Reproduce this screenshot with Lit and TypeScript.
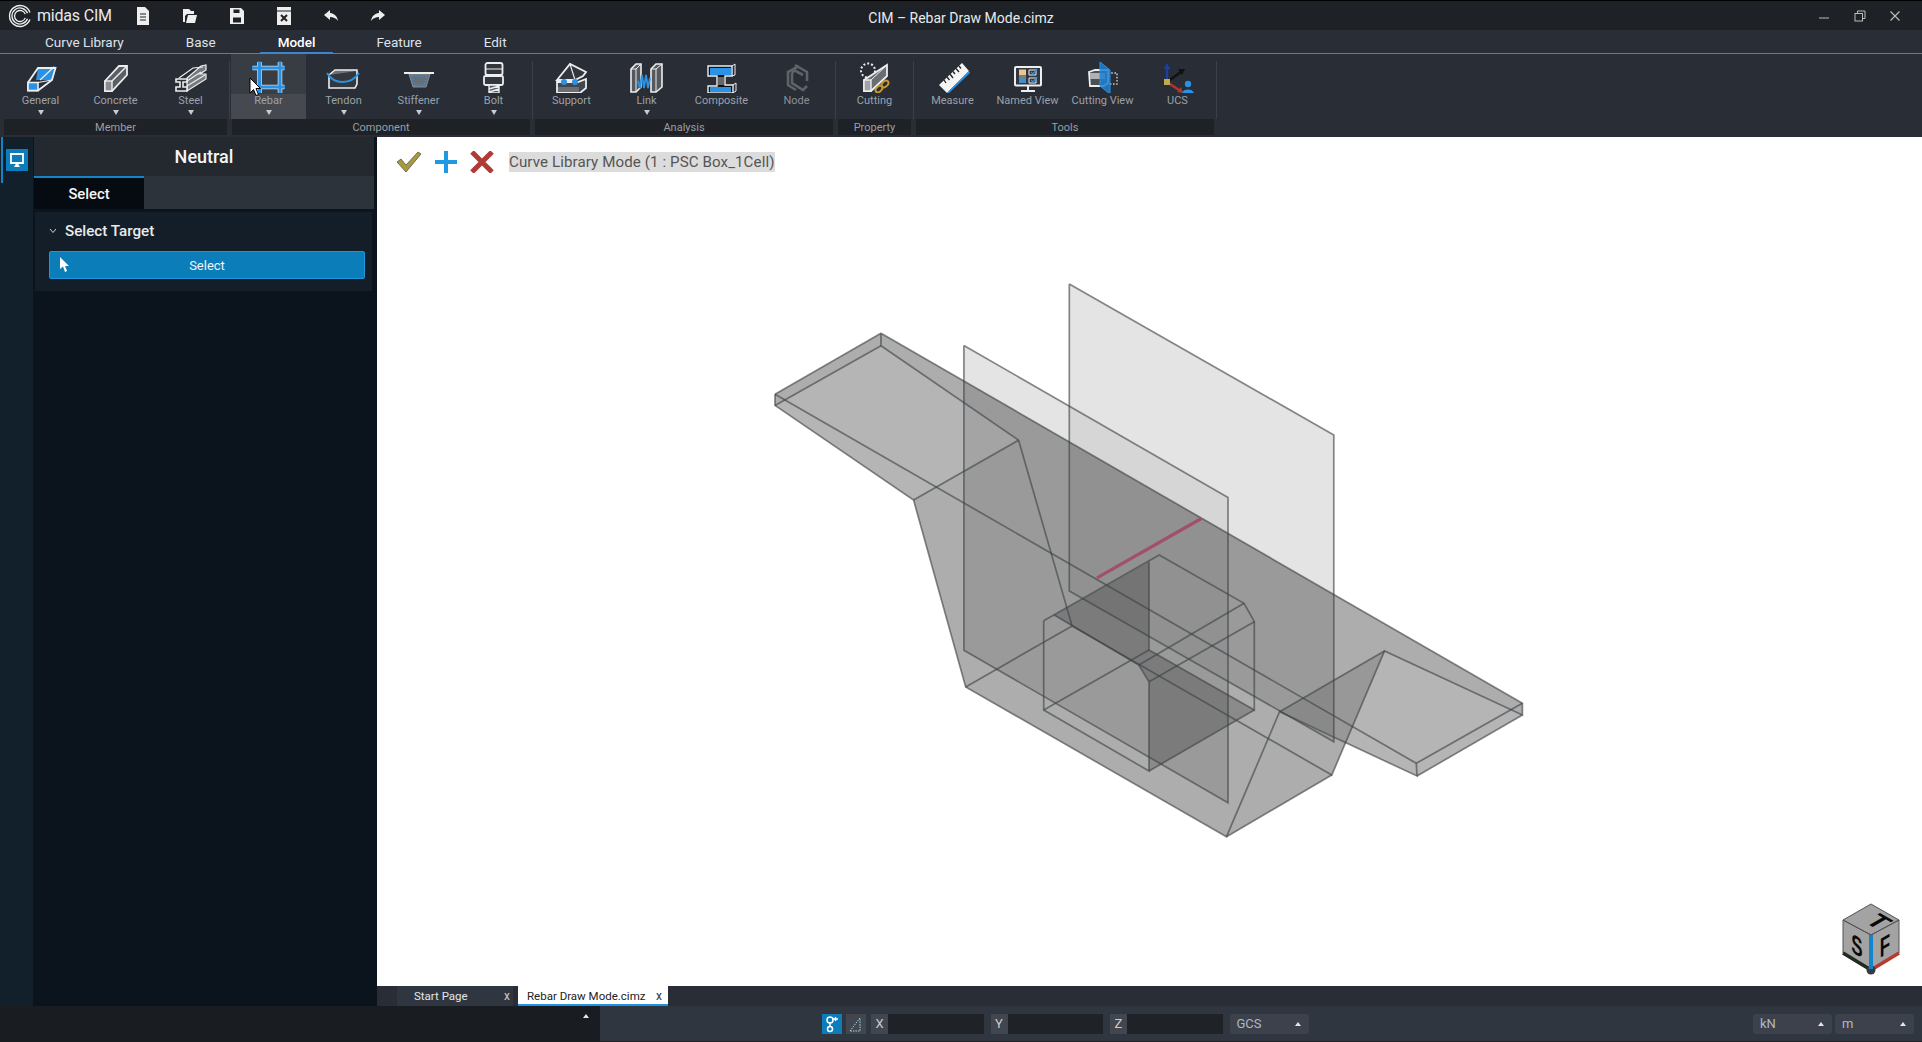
import { LitElement, html, svg, css, type TemplateResult } from "lit";
import { customElement } from "lit/decorators.js";

const W = "#eceef0";
const B = "#2a92e4";

const ICONS: Record<string, TemplateResult> = {
  general: svg`
    <path d="M17 7 34.5 5.5 31 19 15 19Z" fill="${B}"/>
    <path d="M7 21.5 17 7H34.5L31 19 17 29.5H7Z" fill="none" stroke="${W}" stroke-width="1.8"/>
    <rect x="7" y="21.5" width="10" height="8" fill="${B}" stroke="${W}" stroke-width="1.6"/>
    <path d="M17 21.5 31 19M19 19 33 6" stroke="${W}" stroke-width="1.2" fill="none"/>`,
  concrete: svg`
    <path d="M9 20 23 5H31V14L16 30H9Z" fill="#5c5f64" stroke="${W}" stroke-width="1.8"/>
    <rect x="9" y="20" width="7" height="10" fill="#8a8c90" stroke="${W}" stroke-width="1.4"/>
    <path d="M16 20 31 5" stroke="${W}" stroke-width="1.4"/>`,
  steel: svg`
    <path d="M16 17 30 5 35 4V9L29 13 35 13V18L16 30Z" fill="#77797d" stroke="${W}" stroke-width="1.2"/>
    <path d="M8 17 22 7 32 6M16 20 30 11M16 25 34 14" stroke="${W}" stroke-width="1.2" fill="none"/>
    <path d="M5 18H16V21H12V26H16V30H5V26H9V21H5Z" fill="#2a2d33" stroke="${W}" stroke-width="1.6"/>`,
  rebar: svg`
    <path d="M10.5 1V32M31 1V32M3.5 7H35.5M3.5 26H35.5" stroke="#c9d8e6" stroke-width="4.6"/>
    <path d="M10.5 0.5V32.5M31 0.5V32.5M3 7H36M3 26H36" stroke="${B}" stroke-width="3"/>`,
  tendon: svg`
    <path d="M5 14 11 9H33L32 15H5Z" fill="#6d7075" stroke="${W}" stroke-width="1.4"/>
    <path d="M5 14V27H31L33 23V10" fill="#34373d" stroke="${W}" stroke-width="1.6"/>
    <path d="M3 12C10 24 27 24 35 12" fill="none" stroke="${B}" stroke-width="2"/>`,
  stiffener: svg`
    <path d="M10 13H31L27 26H14Z" fill="#6a6d72" stroke="#8b8e92"/>
    <path d="M13 15H28L25 24H16Z" fill="none" stroke="${B}" stroke-width="1.4" stroke-dasharray="1.6 1.6"/>
    <rect x="5" y="11" width="30" height="2" fill="${W}"/>`,
  bolt: svg`
    <rect x="11.5" y="2" width="17" height="12" rx="2" fill="#33363c" stroke="${W}" stroke-width="1.8"/>
    <path d="M12 8H28" stroke="${W}"/>
    <rect x="10" y="15" width="19" height="9" rx="1.5" fill="#33363c" stroke="${W}" stroke-width="1.8"/>
    <path d="M15 24V32H25V24ZM15 28 25 25M15 31 25 28" fill="#55585d" stroke="${W}" stroke-width="1.4"/>`,
  support: svg`
    <path d="M5 19 18 3 34 11 31 15 23 19Z" fill="#33363c" stroke="${W}" stroke-width="1.8"/>
    <path d="M18 3 23 19" stroke="${W}" stroke-width="1.2"/>
    <path d="M5 21H26L34 18V27L28 32H5Z" fill="#44474c" stroke="${W}" stroke-width="1.8"/>
    <rect x="6" y="26" width="21" height="5" fill="#6b6e73"/>
    <circle cx="12" cy="21" r="3" fill="${B}"/><circle cx="23" cy="21" r="3" fill="${B}"/>`,
  link: svg`
    <path d="M4 8 9 3H14V26L9 31H4Z" fill="#55585d" stroke="${W}" stroke-width="1.6"/>
    <path d="M4 8H9V31M9 8 14 3" stroke="${W}" fill="none"/>
    <path d="M24 8 29 3H35V26L29 31H24Z" fill="#55585d" stroke="${W}" stroke-width="1.6"/>
    <path d="M24 8H29V31M29 8 35 3" stroke="${W}" fill="none"/>
    <path d="M11 20 13 27 15 14 17 27 19 14 21 27 23 17" fill="none" stroke="${B}" stroke-width="1.8"/>`,
  composite: svg`
    <path d="M6 5H30V15H23V24H31V32H6V25H15V15H6Z" fill="#111" stroke="${W}" stroke-width="1.4"/>
    <rect x="8" y="7" width="21" height="7" fill="${B}"/>
    <rect x="16" y="16" width="6" height="8" fill="#666"/>
    <rect x="8" y="26" width="21" height="5" fill="${B}"/>
    <path d="M30 5 33 3 33 14 30 15M31 24 34 22V30L31 32" fill="none" stroke="${W}"/>`,
  node: svg`
    <g fill="none" stroke="#5f6266" stroke-width="2.6">
      <path d="M22 5 11 11V24L19 29"/><path d="M18 4 30 11V20"/>
      <path d="M26 14 17 9 15 13V22L26 29 30 25"/>
    </g>`,
  cutting: svg`
    <circle cx="13" cy="9.5" r="7" fill="none" stroke="${W}" stroke-width="2" stroke-dasharray="2 2"/>
    <path d="M9 19 32 4V15L16 30H9Z" fill="#6a6d72" stroke="${W}" stroke-width="1.8"/>
    <rect x="9" y="19" width="7" height="11" fill="#a0a2a5" stroke="${W}" stroke-width="1.4"/>
    <path d="M16 19 32 4" stroke="${W}"/>
    <g fill="none" stroke="#c99a2e" stroke-width="2">
      <ellipse cx="24" cy="28" rx="4" ry="2.6" transform="rotate(-45 24 28)"/>
      <ellipse cx="30" cy="23" rx="4" ry="2.6" transform="rotate(-45 30 23)"/>
    </g>`,
  measure: svg`
    <path d="M6 24 29 2 36 10 14 32Z" fill="#f4f4f4"/>
    <path d="M14 32 36 10 37 12 15 33Z" fill="${B}"/>
    <path d="M11 19 13 22M14 16 16.5 19M17 13 20 17M20 10.5 22 13M23 7.5 26 11M26 5 28 7.5" stroke="#222" stroke-width="1.3"/>`,
  namedview: svg`
    <rect x="7" y="6" width="26" height="18.5" rx="1" fill="#33363c" stroke="${W}" stroke-width="2"/>
    <rect x="11" y="8.5" width="7" height="5.5" fill="#f0c48a"/>
    <rect x="11" y="14" width="7" height="4" fill="#5f8796"/>
    <rect x="11" y="18" width="7" height="4" fill="#3f8fd0"/>
    <path d="M21 9H28V14H21ZM21 17H28V22H21Z" fill="none" stroke="${W}"/>
    <path d="M23 11 25 13 29 8M23 19 25 21 29 16" fill="none" stroke="${B}" stroke-width="1.3"/>
    <path d="M20 25V29M13 30H27" stroke="${W}" stroke-width="2"/>`,
  cuttingview: svg`
    <path d="M25 12H34V23H25" fill="none" stroke="#c8cacc" stroke-width="1.4" stroke-dasharray="1.6 1.6"/>
    <path d="M6 11 12 9H25V22L21 25H7Z" fill="#4c4f54" stroke="${W}" stroke-width="1.8"/>
    <rect x="7" y="12" width="15" height="6" fill="#b0b2b4"/>
    <path d="M17 1 27 9V33L17 25Z" fill="#1f7fd0" fill-opacity=".85" stroke="#2a92e4"/>`,
  ucs: svg`
    <path d="M9 21V7" stroke="#1f3f9e" stroke-width="2.4"/><path d="M5.5 8 9 2 12.5 8Z" fill="#1f3f9e"/>
    <path d="M9 21 23 11" stroke="#111" stroke-width="2.4"/><path d="M20 8 27 8 24 14Z" fill="#111"/>
    <path d="M9 21 21 29" stroke="#b2352e" stroke-width="2.4"/><path d="M19 31 25 32 23 26Z" fill="#b2352e"/>
    <rect x="6" y="18" width="6" height="6" fill="#c2a94f"/>
    <circle cx="30" cy="23" r="3.2" fill="${B}"/><path d="M24 33C24 27 36 27 36 33Z" fill="${B}"/>`,
};

const GROUPS = [
  { name: "Member", items: [["General", "general", 1], ["Concrete", "concrete", 1], ["Steel", "steel", 1]] },
  { name: "Component", items: [["Rebar", "rebar", 1], ["Tendon", "tendon", 1], ["Stiffener", "stiffener", 1], ["Bolt", "bolt", 1]] },
  { name: "Analysis", items: [["Support", "support", 0], ["Link", "link", 1], ["Composite", "composite", 0], ["Node", "node", 0]] },
  { name: "Property", items: [["Cutting", "cutting", 0]] },
  { name: "Tools", items: [["Measure", "measure", 0], ["Named View", "namedview", 0], ["Cutting View", "cuttingview", 0], ["UCS", "ucs", 0]] },
];

// model points in page pixels, N = near section, F = far section
const NTL = "775,394.3", NBL = "775,405.4", FTL = "881,333.3", FBL = "881,345.8";
const NRL = "913.6,500.1", FRL = "1018.6,440.2", NWL = "965.7,686.9", FWL = "1072.1,625.9";
const NWR = "1226.5,836.7", FWR = "1331.8,775", NRR = "1279.6,711.7", FRR = "1384.5,651";
const NTR = "1416.3,763.3", NBR = "1417,776", FTR = "1522.4,703.3", FBR = "1522.4,715";

const EDGES = [
  [NTL, NTR], [NTL, NBL, NRL, NWL, NWR, NRR, NBR, NTR],
  [FTL, FTR, FBR, FRR, FWR, FWL, FRL, FBL, FTL],
  [NTL, FTL], [NBL, FBL], [NRL, FRL], [NWL, FWL], [NWR, FWR], [NRR, FRR], [NBR, FBR], [NTR, FTR],
  // cell
  ["1043.7,620.7", "1043.7,710", "1149,771", "1149,681.7", "1138.8,665", "1054.3,615"],
  ["1149,561.7", "1149,650", "1254.3,710", "1254.3,621.7", "1244,603.3", "1159.2,555", "1043.7,620.7"],
  ["1043.7,710", "1149,650"], ["1149,771", "1254.3,710"], ["1149,681.7", "1254.3,621.7"], ["1138.8,665", "1244,603.3"],
  // section planes
  ["1069.3,284.1", "1333.8,435", "1333.8,741.7", "1069.3,591.1", "1069.3,284.1"],
  ["963.9,345.5", "1228,497.4", "1228,802.7", "963.9,650.3", "963.9,345.5"],
];

const cubeFaces = "M1871 904 1899 920 1871 935 1843 920ZM1843 920 1871 935V970L1843 953ZM1899 920V953L1871 970V935Z";

@customElement("app-root")
export class AppRoot extends LitElement {
  private renderBtn(item: (string | number)[]) {
    const [label, icon, arrow] = item;
    const hot = label === "Rebar";
    return html`
      <div class="btn ${hot ? "hot" : ""}">
        <svg class="ricon" width="40" height="32" viewBox="0 0 40 32">${ICONS[icon as string]}</svg>
        <div class="blabel ${label === "Node" ? "off" : ""}">${label}</div>
        ${arrow ? html`<i class="caret"></i>` : ""}
        ${hot
          ? html`<svg class="cursor" width="12" height="20" viewBox="0 0 12 20">
              <path d="M1 1V16L4.5 12.5 7 18.5 9.5 17.5 7 11.5H11.5Z" fill="#fff" stroke="#000"/>
            </svg>`
          : ""}
      </div>
    `;
  }

  private renderTitle() {
    return html`
      <div class="title">
        <svg class="logo" width="24" height="24" viewBox="0 0 24 24" fill="none" stroke="#eceef0">
          <path d="M21.9 8.4A10.5 10.5 0 1 0 21.9 15.6" stroke-width="1.4"/>
          <path d="M19.5 9.3A8 8 0 1 0 19.5 14.7" stroke-width="1.3"/>
          <path d="M17.2 10.1A5.5 5.5 0 1 0 17.2 13.9" stroke-width="1.3"/>
        </svg>
        <span class="brand">midas CIM</span>
        <div class="qa">
          <svg width="16" height="18" viewBox="0 0 16 18"><path d="M2 0H10L14 4V18H2Z" fill="#eee"/><path d="M5 7H11M5 10H11M5 13H11" stroke="#222" stroke-width="1.2"/></svg>
          <svg width="16" height="18" viewBox="0 0 16 18"><path d="M1 2H7L9 4H12V7H5L3 9V15H1ZM4 16 6 8H15L13 16Z" fill="#eee"/></svg>
          <svg width="16" height="18" viewBox="0 0 16 18"><path d="M1 1H12L15 4V17H1Z" fill="#eee"/><rect x="4.5" y="2.5" width="6" height="3.5" fill="#1e2125"/><rect x="4" y="10.5" width="8" height="5" fill="#1e2125"/></svg>
          <svg width="16" height="18" viewBox="0 0 16 18"><path d="M1 0H15V18H1Z" fill="#eee"/><path d="M1 4H15" stroke="#222"/><path d="M5 8 11 14M11 8 5 14" stroke="#222" stroke-width="2"/></svg>
          <svg width="16" height="14" viewBox="0 0 16 14"><path d="M7 1 1 6 7 11V8C10 8 13 9 15 12 14.5 8 12 4.5 7 4Z" fill="#eee"/></svg>
          <svg width="16" height="14" viewBox="0 0 16 14"><path d="M9 1 15 6 9 11V8C6 8 3 9 1 12 1.5 8 4 4.5 9 4Z" fill="#eee"/></svg>
        </div>
        <div class="caption">CIM – Rebar Draw Mode.cimz</div>
        <div class="win">
          <svg width="12" height="12" viewBox="0 0 12 12"><path d="M1 8H11" stroke="#bbb"/></svg>
          <svg width="12" height="12" viewBox="0 0 12 12" fill="none" stroke="#bbb"><rect x="1" y="3.5" width="7.5" height="7.5"/><path d="M3.5 3V1H11V8.5H8.5"/></svg>
          <svg width="12" height="12" viewBox="0 0 12 12"><path d="M1.5 1.5 10.5 10.5M10.5 1.5 1.5 10.5" stroke="#bbb" stroke-width="1.2"/></svg>
        </div>
      </div>
    `;
  }

  private renderModel() {
    return html`
      <svg class="model" viewBox="377 137 1545 849" preserveAspectRatio="xMinYMin">
        <polygon points="1069.3,284.1 1333.8,435 1333.8,741.7 1069.3,591.1" fill="#000" fill-opacity=".105"/>
        <polygon points="963.9,345.5 1228,497.4 1228,802.7 963.9,650.3" fill="#000" fill-opacity=".105"/>
        <polygon points="1069.3,405.5 1228,497.4 1228,681.4 1069.3,591.1" fill="#fff" fill-opacity=".22"/>
        <polygon
          points="${NTL} ${FTL} ${FTR} ${FBR} ${NBR} 1345.6,742.6 ${FWR} ${NWR} ${NWL} ${NRL} ${NBL}"
          fill="#000" fill-opacity=".32"/>
        <polygon points="${NBL} ${FBL} ${FRL} ${NRL}" fill="#fff" fill-opacity=".1"/>
        <polygon points="${NRR} ${FRR} ${FBR} ${NBR}" fill="#fff" fill-opacity=".1"/>
        <polygon points="1054.3,615 1149,561.7 1149,650 1133,661.7 1071.4,625.7" fill="#000" fill-opacity=".2"/>
        <polygon points="1149,681.7 1159,676 1254.3,710 1149,771" fill="#000" fill-opacity=".2"/>
        <polygon points="1133,661.7 1149,650 1254.3,710 1159,676 1149,681.7 1138.8,665" fill="#000" fill-opacity=".2"/>
        <polygon points="${NRR} ${FRR} 1345.6,742.6 1331.8,735" fill="#000" fill-opacity=".16"/>
        ${EDGES.map(
          (pts) => svg`<polyline points="${pts.join(" ")}" fill="none" stroke="#3c4246" stroke-opacity=".62" stroke-width="1.7"/>`
        )}
        <line x1="1097" y1="577.8" x2="1201.3" y2="518.5" stroke="#a2506a" stroke-width="3.2"/>
        <path d="${cubeFaces}" fill="#a3a3a3" stroke="#555" stroke-width="1"/>
        <path d="M1843 953 1871 970" stroke="#1f2a20" stroke-width="3.5"/>
        <path d="M1871 970 1899 953" stroke="#b53a30" stroke-width="3.5"/>
        <circle cx="1871" cy="970" r="4.5" fill="#333a48"/>
        <path d="M1871 935V969" stroke="#1284c8" stroke-width="4"/>
        <g class="cube" text-anchor="middle">
          <text transform="matrix(.95 .55 -.95 .55 1871 926)" font-size="24">T</text>
          <text transform="matrix(.85 .5 0 1.35 1857 955)" font-size="20">S</text>
          <text transform="matrix(.85 -.5 0 1.35 1885 955)" font-size="20">F</text>
        </g>
      </svg>
    `;
  }

  protected render() {
    return html`
      ${this.renderTitle()}
      <div class="tabs">
        ${["Curve Library", "Base", "Model", "Feature", "Edit"].map(
          (t) => html`<div class="tab ${t === "Model" ? "on" : ""}">${t}</div>`
        )}
      </div>
      <div class="ribbon">
        ${GROUPS.map(
          (g) => html`
            <div class="group">
              <div class="row">${g.items.map((i) => this.renderBtn(i))}</div>
              <div class="gname">${g.name}</div>
            </div>
          `
        )}
      </div>
      <div class="main">
        <div class="strip">
          <div class="stripbtn">
            <svg width="16" height="16" viewBox="0 0 16 16">
              <path d="M2 2H14V11H2Z" fill="none" stroke="#fff" stroke-width="1.8"/>
              <path d="M5 15 8 10 11 15Z" fill="#fff"/>
            </svg>
          </div>
        </div>
        <div class="panel">
          <div class="phead">Neutral</div>
          <div class="ptabs"><div class="ptab">Select</div></div>
          <div class="sect">
            <div class="shead">
              <svg width="8" height="6" viewBox="0 0 8 6"><path d="M1 1 4 4.5 7 1" fill="none" stroke="#cfd3d6"/></svg>
              Select Target
            </div>
            <div class="selbtn">
              <svg width="12" height="16" viewBox="0 0 12 16"><path d="M1 0V12L4 9.5 6 15 8 14 6 9H10Z" fill="#fff"/></svg>
              <span>Select</span>
            </div>
          </div>
        </div>
        <div class="work">
          <div class="view">
            ${this.renderModel()}
            <div class="tools">
              <svg width="26" height="22" viewBox="0 0 26 22"><path d="M1 11 5 8 10 14 22 1 25 3 10 21Z" fill="#a89a3a" stroke="#555" stroke-width=".8"/></svg>
              <svg width="24" height="24" viewBox="0 0 24 24"><path d="M12 1V23M1 12H23" stroke="#1f9ae2" stroke-width="4"/></svg>
              <svg width="24" height="22" viewBox="0 0 24 22"><path d="M2 1 22 21M22 1 2 21" stroke="#b13a36" stroke-width="5"/></svg>
              <span class="mode">Curve Library Mode (1 : PSC Box_1Cell)</span>
            </div>
          </div>
          <div class="docs">
            <div class="doc">Start Page<i>x</i></div>
            <div class="doc on">Rebar Draw Mode.cimz<i>x</i></div>
          </div>
        </div>
      </div>
      <div class="status">
        <div class="sleft"><i class="up"></i></div>
        <div class="sright">
          <div class="sbtn blue">
            <svg width="14" height="18" viewBox="0 0 14 18" fill="none" stroke="#fff" stroke-width="1.5">
              <circle cx="5" cy="5" r="3"/><circle cx="5" cy="14" r="2.5"/><path d="M5 8V11M8 4H13M10.5 2V6"/>
            </svg>
          </div>
          <div class="sbtn">
            <svg width="16" height="18" viewBox="0 0 16 18" fill="none" stroke="#a5d0ea"><path d="M2 16 12 3V16Z" stroke-dasharray="1.5 1"/></svg>
          </div>
          ${["X", "Y", "Z"].map(
            (a) => html`<div class="coord"><b>${a}</b><span></span></div>`
          )}
          <div class="drop gcs">GCS<i class="up"></i></div>
          <div class="units">
            <div class="drop">kN<i class="up"></i></div>
            <div class="drop">m<i class="up"></i></div>
          </div>
        </div>
      </div>
    `;
  }

  static styles = css`
    :host {
      display: flex;
      flex-direction: column;
      height: 100vh;
      background: #1e2125;
      font-family: Roboto, "Liberation Sans", sans-serif;
      color: #fff;
      overflow: hidden;
    }
    .title {
      height: 30px;
      flex: none;
      box-sizing: border-box;
      border-top: 1px solid #000;
      background: #1e2125;
      display: flex;
      align-items: center;
      position: relative;
      padding-left: 8px;
    }
    .logo {
      flex: none;
    }
    .brand {
      margin-left: 5px;
      width: 98px;
      font-size: 16px;
      color: #e8eaec;
      letter-spacing: -0.2px;
    }
    .qa {
      display: flex;
      align-items: center;
      gap: 31px;
    }
    .caption {
      position: absolute;
      left: 0;
      right: 0;
      top: 9px;
      text-align: center;
      font-size: 14px;
      color: #e8eaec;
      pointer-events: none;
    }
    .win {
      margin-left: auto;
      margin-right: 21px;
      display: flex;
      gap: 23.5px;
    }
    .tabs {
      height: 24px;
      flex: none;
      box-sizing: border-box;
      background: #282d36;
      border-bottom: 1px solid #3f84d0;
      display: flex;
      padding-left: 14px;
    }
    .tab {
      padding: 0 31px;
      font-size: 13.5px;
      line-height: 25px;
      color: #dfe3e8;
      height: 24px;
      box-sizing: border-box;
    }
    .tab.on {
      color: #fff;
      font-weight: 500;
      border-bottom: 2px solid #3f84d0;
      padding: 0 18px;
      margin: 0 12px 0 13px;
    }
    .ribbon {
      height: 83px;
      flex: none;
      background: #282d36;
      display: flex;
      gap: 3px;
      padding-left: 3px;
      box-sizing: border-box;
    }
    .group {
      position: relative;
      display: flex;
      flex-direction: column;
    }
    .group::after {
      content: "";
      position: absolute;
      right: -2px;
      top: 7px;
      bottom: 18px;
      width: 1px;
      background: #3b4048;
    }
    .row {
      display: flex;
      height: 65px;
    }
    .gname {
      height: 16px;
      background: #1e2125;
      margin: 0 1px;
      text-align: center;
      font-size: 11px;
      line-height: 18px;
      color: #9a9fa6;
    }
    .btn {
      width: 75px;
      height: 65px;
      position: relative;
      display: flex;
      flex-direction: column;
      align-items: center;
    }
    .btn.hot {
      background: linear-gradient(#383c43 0 40px, #46494f 40px);
    }
    .ricon {
      margin-top: 7px;
      flex: none;
    }
    .blabel {
      margin-top: 1px;
      font-size: 11px;
      line-height: 14px;
      color: #9ca1a8;
      white-space: nowrap;
    }
    .blabel.off {
      color: #8b8f95;
    }
    .caret {
      margin-top: 2px;
      border: 3px solid transparent;
      border-top: 5px solid #c8ccd0;
      border-bottom: 0;
    }
    .cursor {
      position: absolute;
      left: 18px;
      top: 23px;
    }
    .main {
      flex: 1;
      min-height: 0;
      display: flex;
    }
    .strip {
      width: 33px;
      flex: none;
      box-sizing: border-box;
      background: #12202c;
      padding: 12px 0 0 6px;
      position: relative;
    }
    .strip::before {
      content: "";
      position: absolute;
      left: 1px;
      top: 0;
      width: 1.5px;
      height: 46px;
      background: #1284c8;
    }
    .stripbtn {
      width: 22px;
      height: 22px;
      background: #0d7cba;
      display: flex;
      align-items: center;
      justify-content: center;
    }
    .panel {
      width: 344px;
      flex: none;
      background: #0b141d;
      box-sizing: border-box;
      padding-right: 3px;
    }
    .phead {
      height: 39px;
      background: #24282f;
      text-align: center;
      font-size: 18px;
      font-weight: 500;
      line-height: 39px;
      margin-left: 1px;
      color: #f4f5f6;
    }
    .ptabs {
      height: 33px;
      background: #2d333b;
      margin-left: 1px;
    }
    .ptab {
      width: 110px;
      height: 33px;
      box-sizing: border-box;
      background: #050b11;
      border-top: 2px solid #1284c8;
      text-align: center;
      font-size: 14.8px;
      font-weight: 500;
      line-height: 33px;
      color: #f4f5f6;
    }
    .sect {
      margin: 3px 2px 0;
      height: 79px;
      background: #141e29;
      box-sizing: border-box;
      padding: 0 7px 0 14px;
    }
    .shead {
      height: 37px;
      margin-bottom: 2px;
      display: flex;
      align-items: center;
      gap: 8px;
      font-size: 15.2px;
      font-weight: 500;
      color: #e8eaec;
    }
    .selbtn {
      height: 28px;
      box-sizing: border-box;
      background: #0b7db8;
      border: 1px solid #1d96dc;
      border-radius: 2px;
      display: flex;
      align-items: center;
      padding-left: 9px;
      font-size: 13px;
      color: #f0f4f7;
    }
    .selbtn span {
      flex: 1;
      text-align: center;
      padding-right: 21px;
    }
    .work {
      flex: 1;
      min-width: 0;
      display: flex;
      flex-direction: column;
    }
    .view {
      flex: 1;
      min-height: 0;
      background: #fff;
      position: relative;
    }
    .model {
      position: absolute;
      inset: 0;
      width: 100%;
      height: 100%;
    }
    .cube text {
      font-family: "Liberation Sans", sans-serif;
      font-weight: 700;
      fill: #0a0a0a;
    }
    .tools {
      position: relative;
      display: flex;
      align-items: center;
      height: 50px;
      padding-left: 19px;
    }
    .tools svg {
      margin-right: 12px;
      flex: none;
    }
    .mode {
      margin-left: 3px;
      background: #dcdcdc;
      color: #555;
      font-size: 15.1px;
      line-height: 20px;
      height: 20px;
      white-space: nowrap;
      letter-spacing: 0.1px;
    }
    .docs {
      height: 20px;
      flex: none;
      background: #282d36;
      display: flex;
      padding-left: 20px;
      gap: 5px;
    }
    .doc {
      width: 116px;
      box-sizing: border-box;
      background: #2f3640;
      font-size: 11.5px;
      line-height: 20px;
      padding-left: 17px;
      color: #e4e6e8;
      position: relative;
    }
    .doc.on {
      width: 150px;
      background: #fff;
      color: #222;
      border-bottom: 2px solid #2192df;
      padding-left: 9px;
    }
    .doc i {
      position: absolute;
      right: 3px;
      top: 0;
      font-style: normal;
      font-size: 12px;
      color: #ccc;
    }
    .doc.on i {
      right: 6px;
      color: #333;
    }
    .status {
      height: 36px;
      flex: none;
      display: flex;
    }
    .sleft {
      width: 600px;
      flex: none;
      background: #191c20;
      display: flex;
      justify-content: flex-end;
      padding: 8px 11px 0 0;
      box-sizing: border-box;
    }
    .up {
      width: 0;
      height: 0;
      flex: none;
      border: 3px solid transparent;
      border-bottom: 4px solid #e4e6e8;
      border-top: 0;
    }
    .sright {
      flex: 1;
      background: #2f3640;
      display: flex;
      align-items: center;
      padding: 0 8px 0 222px;
      height: 35px;
    }
    .sbtn {
      width: 20px;
      height: 20px;
      background: #41464f;
      margin-right: 4px;
      display: flex;
      align-items: center;
      justify-content: center;
    }
    .sbtn + .sbtn {
      margin-right: 5px;
    }
    .sbtn.blue {
      background: #0d7cba;
    }
    .coord {
      display: flex;
      width: 112.5px;
      height: 20px;
      margin-right: 7px;
      font-size: 13px;
      color: #c9cdd2;
    }
    .coord b {
      width: 17px;
      background: #41464f;
      font-weight: 400;
      text-align: center;
      line-height: 20px;
    }
    .coord span {
      flex: 1;
      background: #1f2328;
    }
    .drop {
      width: 79px;
      height: 20px;
      box-sizing: border-box;
      background: #3c414b;
      border-radius: 3px;
      padding: 0 8px 0 7px;
      font-size: 13px;
      line-height: 20px;
      color: #aeb9c6;
      display: flex;
      align-items: center;
      justify-content: space-between;
    }
    .units {
      margin-left: auto;
      display: flex;
      gap: 3px;
    }
  `;
}
